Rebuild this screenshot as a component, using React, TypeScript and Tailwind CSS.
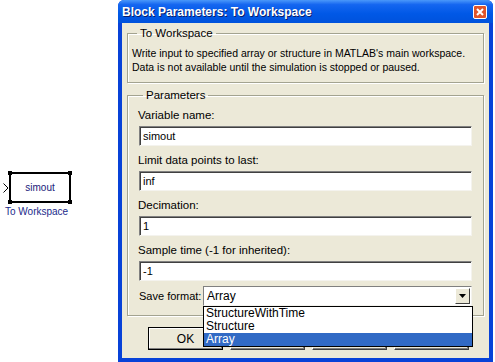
import React from "react";

const font = { fontFamily: '"Liberation Sans", Arial, sans-serif' };

const fields = [
  { label: "Variable name:", value: "simout" },
  { label: "Limit data points to last:", value: "inf" },
  { label: "Decimation:", value: "1" },
  { label: "Sample time (-1 for inherited):", value: "-1" },
];

const options = ["StructureWithTime", "Structure", "Array"];

const Handle = ({ className }: { className: string }) => (
  <span className={`absolute w-[4px] h-[4px] bg-black ${className}`} />
);

const SimBlock = () => (
  <div className="w-[118px] shrink-0 pt-[172px] pl-[3px]">
    <div className="flex items-center">
      <svg width="6" height="10" viewBox="0 0 6 10" className="shrink-0">
        <path d="M0.5 0.5 L5 5 L0.5 9.5" stroke="black" strokeWidth="1" fill="none" />
      </svg>
      <div className="relative w-[62px] h-[31px] border-2 border-black flex items-center justify-center">
        <Handle className="-left-[3px] -top-[3px]" />
        <Handle className="-right-[3px] -top-[3px]" />
        <Handle className="-left-[3px] -bottom-[3px]" />
        <Handle className="-right-[3px] -bottom-[3px]" />
        <span className="text-[10px] text-[#1a1a7a]">simout</span>
      </div>
    </div>
    <div className="text-[10px] text-[#1a2a8a] leading-[12px] mt-[3px] pl-[2px]">To Workspace</div>
  </div>
);

const Input = ({ value }: { value: string }) => (
  <div className="h-[20px] ml-[1px] mr-[11px] bg-white border border-t-[#808080] border-l-[#808080] border-b-[#f4f3ee] border-r-[#f4f3ee] shadow-[inset_1px_1px_0_#404040] flex items-center pl-[3px] text-[11px] text-black">
    {value}
  </div>
);

const App = () => {
  return (
    <div className="flex w-[495px] h-[362px] bg-white overflow-hidden" style={font}>
      <SimBlock />

      {/* DIALOG */}
      <div className="w-[375px] h-[362px] shrink-0 flex flex-col bg-[#0842d8] px-[4px] pb-[4px] rounded-t-[6px]">
        {/* TITLE BAR */}
        <div className="h-[23px] shrink-0 -mx-[4px] px-[4px] pt-[1px] flex items-center justify-between rounded-t-[6px] bg-[linear-gradient(#4a98fa_0%,#1566f0_20%,#0058e6_60%,#0052dc_100%)]">
          <span className="text-white font-bold text-[12px] [text-shadow:1px_1px_0_#0a1e6a]">
            Block Parameters: To Workspace
          </span>
          <span className="w-[14px] h-[14px] mr-[2px] rounded-[2px] border border-white bg-[#e0552b] flex items-center justify-center">
            <svg width="8" height="8" viewBox="0 0 8 8">
              <path d="M1 1 L7 7 M7 1 L1 7" stroke="white" strokeWidth="2" />
            </svg>
          </span>
        </div>

        {/* BODY */}
        <div className="flex-1 min-h-0 bg-[#ece9d8] px-[5px] pt-[3px] text-[10.5px] text-black leading-[14px]">
          <fieldset className="border border-[#a3a390] shadow-[inset_1px_1px_0_white,1px_1px_0_white] px-[4px] pb-[8px]">
            <legend className="ml-[5px] px-[3px] text-[11.5px]">To Workspace</legend>
            <p className="mt-[6px] whitespace-nowrap">Write input to specified array or structure in MATLAB's main workspace.</p>
            <p className="whitespace-nowrap">Data is not available until the simulation is stopped or paused.</p>
          </fieldset>

          <fieldset className="mt-[5px] border border-[#a3a390] shadow-[inset_1px_1px_0_white,1px_1px_0_white] pl-[10px] pb-[9px]">
            <legend className="ml-[5px] px-[3px] text-[11.5px]">Parameters</legend>
            {fields.map((f, i) => (
              <div key={i} className={i === 0 ? "mt-[2px]" : "mt-[3px]"}>
                <div className="h-[22px] flex items-center text-[11.5px]">{f.label}</div>
                <Input value={f.value} />
              </div>
            ))}

            {/* SAVE FORMAT */}
            <div className="flex items-center mt-[5px] mr-[11px]">
              <span className="w-[64px] text-[11px] ml-[1px] whitespace-nowrap">Save format:</span>
              <div className="relative flex-1">
                <div className="h-[20px] bg-white border border-t-[#808080] border-l-[#808080] border-b-[#f4f3ee] border-r-[#f4f3ee] flex items-center justify-between pl-[3px] text-[12px]">
                  <span>Array</span>
                  <span className="w-[15px] h-[16px] mr-[1px] bg-[#ece9d8] border border-t-white border-l-white border-b-[#404040] border-r-[#404040] flex items-center justify-center">
                    <svg width="7" height="4" viewBox="0 0 7 4">
                      <path d="M0 0 H7 L3.5 4 Z" fill="black" />
                    </svg>
                  </span>
                </div>
                {/* DROPDOWN */}
                <div className="absolute left-0 -right-[1px] top-[20px] z-10 bg-white border border-black text-[12px] leading-[13px]">
                  {options.map((o) => (
                    <div
                      key={o}
                      className={`pl-[2px] ${o === "Array" ? "bg-[#316ac5] text-white" : ""}`}
                    >
                      {o}
                    </div>
                  ))}
                </div>
              </div>
            </div>
          </fieldset>

          {/* BUTTONS */}
          <div className="flex gap-[7px] mt-[11px] ml-[21px]">
            {["OK", "Cancel", "Help", "Apply"].map((b, i) => (
              <div
                key={b}
                className={`w-[75px] h-[23px] bg-[#ece9d8] flex items-center justify-center text-[12px] border ${
                  i === 0
                    ? "border-black shadow-[inset_-1px_-1px_0_#808080,inset_1px_1px_0_white]"
                    : "border-t-white border-l-white border-b-[#404040] border-r-[#404040] shadow-[inset_-1px_-1px_0_#808080]"
                }`}
              >
                {b}
              </div>
            ))}
          </div>
        </div>
      </div>
    </div>
  );
};

export default App;
